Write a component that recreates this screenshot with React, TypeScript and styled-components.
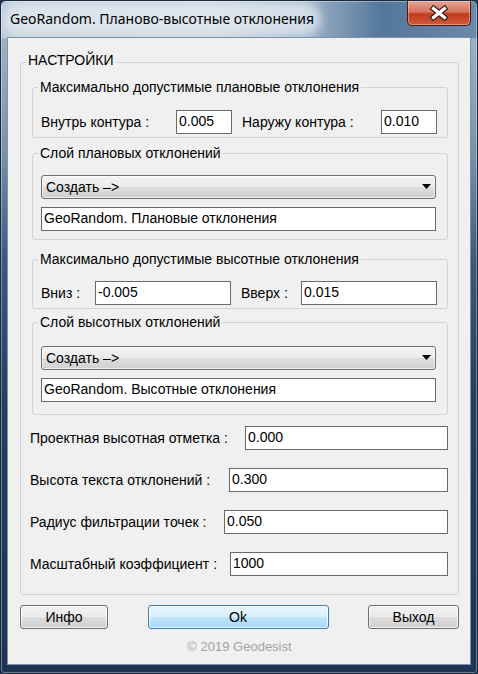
import React from 'react';
import styled, {createGlobalStyle} from 'styled-components';

const GlobalStyle = createGlobalStyle`
  html, body {
    margin: 0;
    padding: 0;
    background: #1f3858;
  }
  body {
    font-family: "Liberation Sans", Arial, sans-serif;
  }
  * {
    box-sizing: border-box;
  }
`;

const Window = styled.div`
  width: 478px;
  height: 674px;
  display: flex;
  flex-direction: column;
  padding: 0 6px 8px;
  border: 1px solid #1b2b3d;
  border-radius: 6px 6px 4px 4px;
  box-shadow: inset 0 0 0 1px rgba(255, 255, 255, 0.35);
  background:
    linear-gradient(90deg, #bccbd9 0%, #c6d2dd 45%, #a3b7cb 63%, #54779c 80%, #6b89a9 100%) top / 100% 37px no-repeat,
    linear-gradient(180deg, #9db1c5 37px, #7a93ad 150px, #3a597d 260px, #23405f 400px, #1d3553 100%);
  overflow: hidden;
`;

const TitleBar = styled.div`
  height: 36px;
  flex: none;
  display: flex;
  align-items: flex-start;
  justify-content: space-between;
  padding-left: 3px;
`;

const Title = styled.span`
  margin-top: 8px;
  font-family: "Noto Sans", "Open Sans", sans-serif;
  font-size: 14px;
  line-height: 20px;
  color: #000;
  white-space: nowrap;
  background: rgba(228, 235, 241, 0.75);
  box-shadow: 0 0 10px 7px rgba(228, 235, 241, 0.75);
  border-radius: 10px;
`;

const CloseButton = styled.div`
  width: 64px;
  height: 25px;
  display: flex;
  align-items: center;
  justify-content: center;
  border: 1px solid #4a1b13;
  border-top: none;
  border-radius: 0 0 5px 5px;
  box-shadow: inset 0 0 0 1px rgba(255, 255, 255, 0.35);
  background: linear-gradient(180deg, #e6a493 0%, #d6745d 45%, #c03a1e 55%, #d25a3c 100%);
`;

const Client = styled.div`
  flex: 1;
  display: flex;
  flex-direction: column;
  background: #f0f0f0;
  border: 1px solid #7f93a8;
  padding: 14px 11px 0 12px;
  font-size: 14px;
  color: #000;
`;

const Group = styled.fieldset<{$mt?: number; $ml?: number}>`
  margin: ${({$mt}) => $mt ?? 0}px 0 0 ${({$ml}) => $ml ?? 0}px;
  padding: 0;
  min-width: 0;
  border: 1px solid #d3d3d3;
  border-radius: 3px;
`;

const Legend = styled.legend<{$drop?: number}>`
  margin-left: 5px;
  padding: 0 2px ${({$drop}) => $drop ?? 0}px;
  font-size: 14px;
  line-height: 16px;
  white-space: nowrap;
`;

const GroupBody = styled.div<{$pad: string; $gap?: number}>`
  display: flex;
  flex-direction: column;
  gap: ${({$gap}) => $gap ?? 0}px;
  padding: ${({$pad}) => $pad};
`;

const PairRow = styled.div<{$cols: string}>`
  display: grid;
  grid-template-columns: ${({$cols}) => $cols};
  align-items: center;
`;

const PairLabel = styled.span<{$indent?: number}>`
  padding-left: ${({$indent}) => $indent ?? 0}px;
  white-space: nowrap;
`;

const Field = styled.input`
  width: 100%;
  min-width: 0;
  height: 24px;
  margin: 0;
  padding: 0 2px 2px;
  border: 1px solid #6a6a6a;
  border-radius: 0;
  background: #fff;
  font: 14px "Liberation Sans", Arial, sans-serif;
  color: #000;
  outline: none;
`;

const Combo = styled.div`
  height: 24px;
  display: flex;
  align-items: center;
  justify-content: space-between;
  padding: 0 4px 1px 4px;
  border: 1px solid #707070;
  border-radius: 3px;
  box-shadow: inset 0 0 0 1px rgba(255, 255, 255, 0.6);
  background: linear-gradient(180deg, #f3f3f3 0%, #ebebeb 48%, #dedede 52%, #d0d0d0 100%);
`;

const Rows = styled.div`
  display: flex;
  flex-direction: column;
  gap: 18px;
  margin-top: 11px;
`;

const Row = styled.div`
  display: flex;
  align-items: center;
`;

const RowLabel = styled.span<{$width: number}>`
  width: ${({$width}) => $width}px;
  flex: none;
  white-space: nowrap;
`;

const Buttons = styled.div`
  display: flex;
  justify-content: space-between;
  margin-top: 10px;
`;

const Button = styled.button<{$width: number; $primary?: boolean}>`
  width: ${({$width}) => $width}px;
  height: 24px;
  padding: 0 0 1px;
  font: 14px "Liberation Sans", Arial, sans-serif;
  color: #000;
  border: 1px solid ${({$primary}) => ($primary ? '#3c7fb1' : '#707070')};
  border-radius: 3px;
  box-shadow: inset 0 0 0 1px rgba(255, 255, 255, 0.7);
  background: ${({$primary}) =>
    $primary
      ? 'linear-gradient(180deg, #eaf6fd 0%, #d9f0fc 48%, #bee6fd 52%, #a7d9f5 100%)'
      : 'linear-gradient(180deg, #f2f2f2 0%, #ebebeb 48%, #dddddd 52%, #cfcfcf 100%)'};
`;

const Copyright = styled.div`
  margin-top: 10px;
  text-align: center;
  font-size: 13px;
  line-height: 16px;
  color: #a3a3a3;
`;

const CloseIcon = () => (
  <svg width="20" height="16" viewBox="0 0 20 16">
    <path d="M4.5 3.5 L15.5 12.5 M15.5 3.5 L4.5 12.5" stroke="#3d1711" strokeWidth="5.5" strokeLinecap="square" />
    <path d="M4.5 3.5 L15.5 12.5 M15.5 3.5 L4.5 12.5" stroke="#fff" strokeWidth="3.2" strokeLinecap="square" />
  </svg>
);

const ComboArrow = () => (
  <svg width="9" height="5" viewBox="0 0 9 5">
    <path d="M0 0 H9 L4.5 5 Z" fill="#000" />
  </svg>
);

const rows = [
  {label: 'Проектная высотная отметка :', width: 215, value: '0.000'},
  {label: 'Высота текста отклонений :', width: 199, value: '0.300'},
  {label: 'Радиус фильтрации точек :', width: 194, value: '0.050'},
  {label: 'Масштабный коэффициент :', width: 200, value: '1000'},
];

export default function App() {
  return (
    <>
      <GlobalStyle />
      <Window>
        <TitleBar>
          <Title>GeoRandom. Планово-высотные отклонения</Title>
          <CloseButton>
            <CloseIcon />
          </CloseButton>
        </TitleBar>
        <Client>
          <Group>
            <Legend $drop={5}>НАСТРОЙКИ</Legend>
            <GroupBody $pad="0 10px 18px 9px">
              <Group $mt={6} $ml={2}>
                <Legend>Максимально допустимые плановые отклонения</Legend>
                <GroupBody $pad="15px 10px 3px 8px">
                  <PairRow $cols="135px 56px 1fr 56px">
                    <PairLabel>Внутрь контура :</PairLabel>
                    <Field defaultValue="0.005" />
                    <PairLabel $indent={10}>Наружу контура :</PairLabel>
                    <Field defaultValue="0.010" />
                  </PairRow>
                </GroupBody>
              </Group>

              <Group $mt={7} $ml={2}>
                <Legend>Слой плановых отклонений</Legend>
                <GroupBody $pad="14px 11px 8px 8px" $gap={8}>
                  <Combo>
                    <span>Создать –&gt;</span>
                    <ComboArrow />
                  </Combo>
                  <Field defaultValue="GeoRandom. Плановые отклонения" />
                </GroupBody>
              </Group>

              <Group $mt={11} $ml={2}>
                <Legend>Максимально допустимые высотные отклонения</Legend>
                <GroupBody $pad="14px 10px 3px 8px">
                  <PairRow $cols="54px 136px 1fr 136px">
                    <PairLabel>Вниз :</PairLabel>
                    <Field defaultValue="-0.005" />
                    <PairLabel $indent={10}>Вверх :</PairLabel>
                    <Field defaultValue="0.015" />
                  </PairRow>
                </GroupBody>
              </Group>

              <Group $mt={5} $ml={2}>
                <Legend>Слой высотных отклонений</Legend>
                <GroupBody $pad="16px 11px 12px 8px" $gap={8}>
                  <Combo>
                    <span>Создать –&gt;</span>
                    <ComboArrow />
                  </Combo>
                  <Field defaultValue="GeoRandom. Высотные отклонения" />
                </GroupBody>
              </Group>

              <Rows>
                {rows.map(r => (
                  <Row key={r.label}>
                    <RowLabel $width={r.width}>{r.label}</RowLabel>
                    <Field defaultValue={r.value} />
                  </Row>
                ))}
              </Rows>
            </GroupBody>
          </Group>

          <Buttons>
            <Button $width={88}>Инфо</Button>
            <Button $width={181} $primary>
              Ok
            </Button>
            <Button $width={91}>Выход</Button>
          </Buttons>
          <Copyright>© 2019 Geodesist</Copyright>
        </Client>
      </Window>
    </>
  );
}
